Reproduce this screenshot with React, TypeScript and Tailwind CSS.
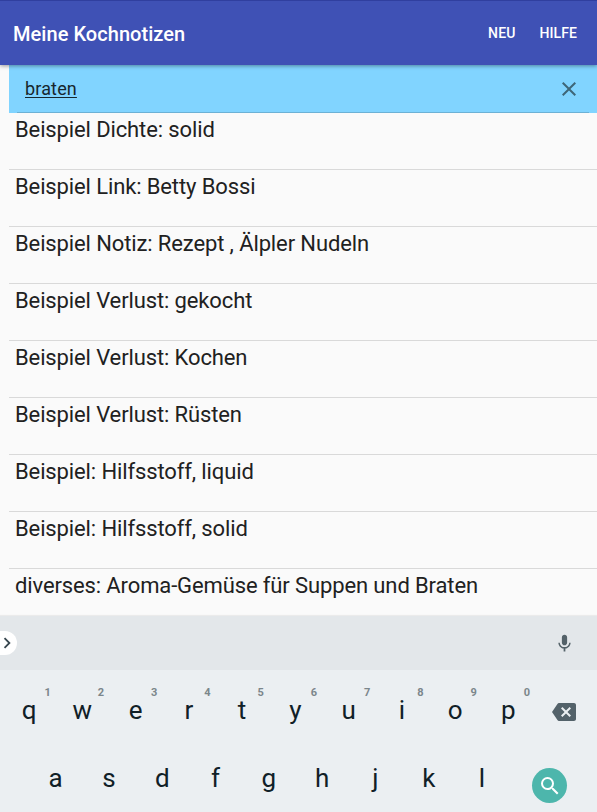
import React from "react";
import { MdBackspace, MdChevronRight, MdClose, MdMic, MdSearch } from "react-icons/md";

const entries = [
  "Beispiel Dichte: solid",
  "Beispiel Link: Betty Bossi",
  "Beispiel Notiz: Rezept , Älpler Nudeln",
  "Beispiel Verlust: gekocht",
  "Beispiel Verlust: Kochen",
  "Beispiel Verlust: Rüsten",
  "Beispiel: Hilfsstoff, liquid",
  "Beispiel: Hilfsstoff, solid",
  "diverses: Aroma-Gemüse für Suppen und Braten",
];

const topKeys = ["q", "w", "e", "r", "t", "y", "u", "i", "o", "p"];
const homeKeys = ["a", "s", "d", "f", "g", "h", "j", "k", "l"];

function AppBar() {
  return (
    <header className="relative z-10 flex h-[65px] shrink-0 items-center justify-between border-t border-[#303f9f] bg-[#3f51b5] pr-[20px] pl-[13px] pt-[2px] text-white shadow-[0_1px_4px_rgba(0,0,0,0.4)]">
      <h1 className="text-[20px] font-medium tracking-[0.05px]">Meine Kochnotizen</h1>
      <nav className="flex gap-[24px] pb-[1px] text-[14px] font-medium tracking-[0.1px]">
        <button>NEU</button>
        <button>HILFE</button>
      </nav>
    </header>
  );
}

function SearchField() {
  return (
    <div className="ml-[9px] flex h-[48px] shrink-0 flex-col bg-[#81d4ff]">
      <div className="flex h-[47px] items-center justify-between pr-[16px] pl-[16px]">
        <span className="text-[18px] tracking-[0.15px] text-[#17262d] underline underline-offset-2">braten</span>
        <MdClose className="size-6 text-[#3e6678]" />
      </div>
      <div className="mr-2 ml-2 h-px bg-[#6cb1d5]" />
    </div>
  );
}

function Keyboard() {
  return (
    <section className="h-[196px] shrink-0 bg-[#ebeff2] shadow-[0_-1px_1px_rgba(0,0,0,0.06)]">
      <div className="flex h-[54px] items-center justify-between bg-[#e3e7ea] pr-[22px]">
        <div className="flex h-6 w-[17px] items-center justify-end rounded-r-full bg-white">
          <MdChevronRight className="size-[22px] shrink-0 -mr-[1px] text-[#37474f]" />
        </div>
        <MdMic className="size-[21px] text-[#546269]" />
      </div>
      <div className="flex h-[68px] pl-[2.5px] text-[#102027]">
        {topKeys.map((key, i) => (
          <div key={key} className="relative flex w-[53.25px] justify-center pt-[22px] text-[26px] leading-9">
            {key}
            <span className="absolute top-[15px] left-[42px] text-[11px] leading-4 font-bold text-[#7b868b]">
              {(i + 1) % 10}
            </span>
          </div>
        ))}
        <div className="flex flex-1 justify-center pt-[30px] pr-[5px]">
          <MdBackspace className="size-6 text-[#53626a]" />
        </div>
      </div>
      <div className="flex h-[74px] pl-[29px] text-[#102027]">
        {homeKeys.map((key) => (
          <div key={key} className="flex w-[53.3px] justify-center pt-[22px] text-[26px] leading-9">
            {key}
          </div>
        ))}
        <div className="flex flex-1 items-start pt-[30px] pl-[23.5px]">
          <div className="flex size-[35px] shrink-0 items-center justify-center rounded-full bg-[#4db6ac]">
            <MdSearch className="size-6 text-white" />
          </div>
        </div>
      </div>
    </section>
  );
}

export default function App() {
  return (
    <main className="flex h-[812px] w-[597px] flex-col overflow-hidden bg-[#fafafa] font-[Roboto,sans-serif]">
      <AppBar />
      <SearchField />
      <ul className="ml-[9px] min-h-0 flex-1 overflow-hidden text-[22px] tracking-[-0.12px] text-[#212121]">
        {entries.map((entry) => (
          <li key={entry} className="h-[57px] border-b border-[#d9d9d9] pl-[6px] leading-[33px] whitespace-nowrap">
            {entry}
          </li>
        ))}
      </ul>
      <Keyboard />
    </main>
  );
}
